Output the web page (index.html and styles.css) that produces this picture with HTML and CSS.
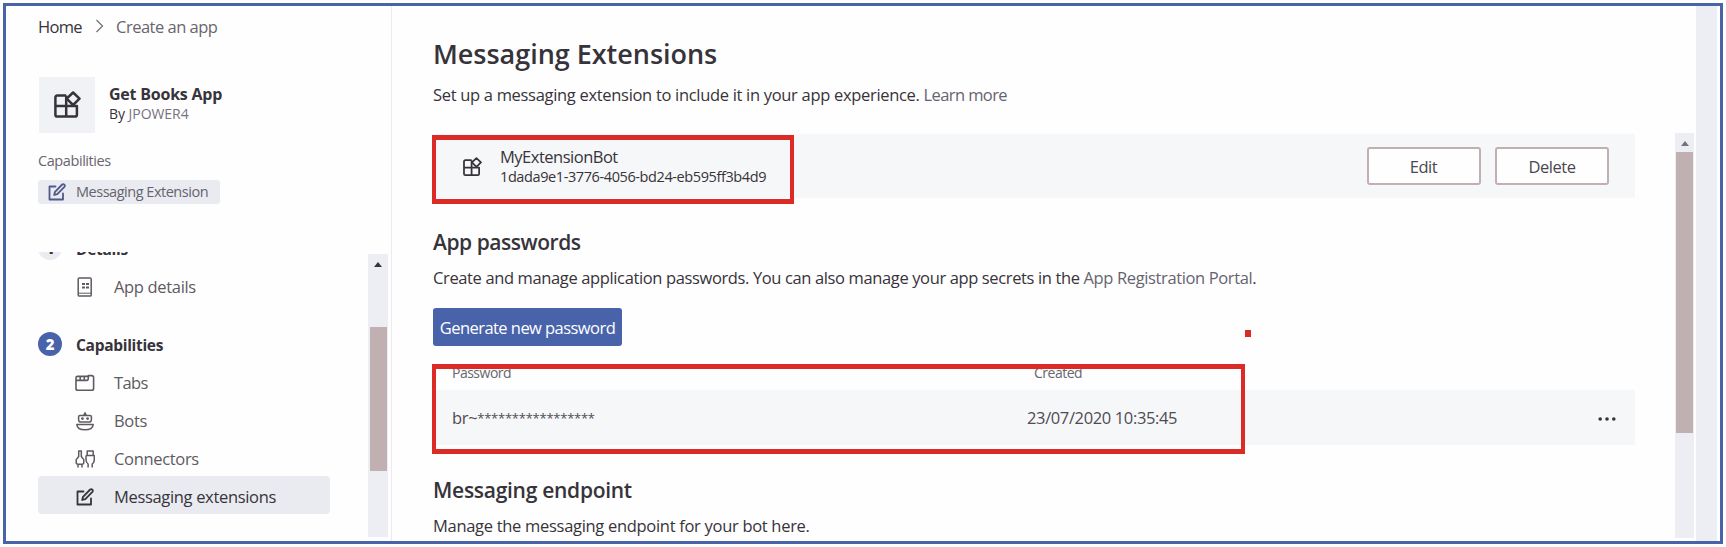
FILE: index.html
```
<!DOCTYPE html>
<html lang="en">
<head>
<meta charset="utf-8">
<title>Messaging Extensions</title>
<link rel="stylesheet" href="styles.css">
</head>
<body>
<svg class="defs" aria-hidden="true">
  <symbol id="i-apps" viewBox="0 0 27 27"><g fill="none" stroke="currentColor" stroke-width="2.5" stroke-linejoin="round"><path d="M12.2 4.6H3.3Q1.4 4.6 1.4 6.5V23.7Q1.4 25.6 3.3 25.6H21Q22.9 25.6 22.9 23.7V15H1.4M12.2 4.6V25.6"/><path d="M19.1 1.5L25.5 7.7L19.1 14L12.7 7.7Z"/></g></symbol>
  <symbol id="i-edit" viewBox="0 0 18 18"><g fill="none" stroke="currentColor" stroke-width="1.8" stroke-linejoin="round" stroke-linecap="round"><path d="M7.5 3.5H1.5V16.5H15V10.5"/><path d="M6.2 12L7 8.8L14.2 1.5Q15.3 .7 16.3 1.7Q17.3 2.8 16.4 3.8L9.3 11.1Z"/></g></symbol>
  <symbol id="i-doc" viewBox="0 0 18 20"><g fill="none" stroke="currentColor" stroke-width="1.5"><rect x="2.2" y=".9" width="13" height="18.2" rx="1.2"/><path d="M2.5 16.2H15" stroke-width="1"/></g><path d="M6 6H9V8H6zM10 6H13V8H10zM6 9.6H9V11.6H6zM10 9.6H13V11.6H10z" fill="currentColor"/></symbol>
  <symbol id="i-tabs" viewBox="0 0 20 18"><g fill="none" stroke="currentColor" stroke-width="1.6" stroke-linejoin="round"><path d="M13.3 4V1.6H16.6Q18.6 1.6 18.6 3.8V14.4Q18.6 16.2 16.8 16.2H2.8Q1 16.2 1 14.4V4Q1 2.4 2.6 2.4H13.3M1 6.4H11.8Q13.3 6.4 13.3 4M5.2 2.6V6M9.3 2.6V6"/></g></symbol>
  <symbol id="i-bot" viewBox="0 0 20 20"><g fill="none" stroke="currentColor" stroke-width="1.5" stroke-linejoin="round"><path d="M5 4.4H15Q16.4 4.4 16.4 5.8V8.4Q16.4 11 14 11H6Q3.6 11 3.6 8.4V5.8Q3.6 4.4 5 4.4Z"/><path d="M1.8 13.6H18.2Q17.6 18.8 10 18.8Q2.4 18.8 1.8 13.6Z"/></g><path d="M10 .4L12.2 4.6H7.8z" fill="currentColor"/><circle cx="7.4" cy="7.6" r="1.4" fill="currentColor"/><circle cx="12.6" cy="7.6" r="1.4" fill="currentColor"/></symbol>
  <symbol id="i-plug" viewBox="0 0 20 18"><g fill="none" stroke="currentColor" stroke-width="1.5" stroke-linejoin="round"><path d="M3.7 1H6.3V6.5L8.8 9.6V12.2Q8.8 14.2 7 14.2H3Q1.2 14.2 1.2 12.2V9.6L3.7 6.5ZM3 14.5V17.6M7 14.5V17.6"/><path d="M12.2 1H18.2V5.6H12.2ZM11 5.6H19.3V9.5Q19.3 12.4 17.2 14V17.5M11 5.6V9.5Q11 12.4 13.1 14V17.5"/></g></symbol>
</svg>
<div class="shell">
  <aside class="side">
    <nav class="crumbs"><span class="home">Home</span><svg class="chev" viewBox="0 0 9 14"><path d="M1.5 1L7.5 7L1.5 13"/></svg><span class="here">Create an app</span></nav>
    <div class="app">
      <div class="tile"><svg><use href="#i-apps"/></svg></div>
      <div><div class="app-name">Get Books App</div><div class="app-by">By <span>JPOWER4</span></div></div>
    </div>
    <div class="cap-label">Capabilities</div>
    <div class="chip"><svg><use href="#i-edit"/></svg><span>Messaging Extension</span></div>
    <div class="list">
      <div class="steps">
        <div class="step clipped"><b class="num off">1</b><span>Details</span></div>
        <div class="item"><svg><use href="#i-doc"/></svg><span>App details</span></div>
        <div class="step second"><b class="num">2</b><span>Capabilities</span></div>
        <div class="item"><svg><use href="#i-tabs"/></svg><span class="tabs">Tabs</span></div>
        <div class="item"><svg><use href="#i-bot"/></svg><span>Bots</span></div>
        <div class="item"><svg><use href="#i-plug"/></svg><span>Connectors</span></div>
        <div class="item sel"><svg><use href="#i-edit"/></svg><span>Messaging extensions</span></div>
      </div>
      <div class="bar side-bar"><i class="up"></i><i class="thumb"></i></div>
    </div>
  </aside>
  <main class="main">
    <header class="head">
      <h1>Messaging Extensions</h1>
      <p>Set up a messaging extension to include it in your app experience. <a class="learn">Learn more</a></p>
    </header>
    <div class="body">
      <div class="content">
        <section class="card">
          <div class="mark"></div>
          <svg><use href="#i-apps"/></svg>
          <div class="bot"><div class="bot-name">MyExtensionBot</div><div class="bot-id">1dada9e1-3776-4056-bd24-eb595ff3b4d9</div></div>
          <button class="btn">Edit</button><button class="btn">Delete</button>
        </section>
        <h2>App passwords</h2>
        <p class="intro">Create and manage application passwords. You can also manage your app secrets in the <a>App Registration Portal</a>.</p>
        <button class="primary">Generate new password</button>
        <section class="table">
          <div class="mark wide"></div><div class="dot"></div>
          <div class="th"><span>Password</span><span class="created">Created</span></div>
          <div class="tr"><span class="pw">br~<span class="stars">*****************</span></span><span class="date">23/07/2020 10:35:45</span><svg class="more" viewBox="0 0 18 4"><circle cx="2.2" cy="2" r="1.8"/><circle cx="9" cy="2" r="1.8"/><circle cx="15.8" cy="2" r="1.8"/></svg></div>
        </section>
        <h2 class="endpoint">Messaging endpoint</h2>
        <p>Manage the messaging endpoint for your bot here.</p>
      </div>
      <div class="bar main-bar"><i class="up"></i><i class="thumb"></i></div>
    </div>
  </main>
  <div class="gutter"></div>
</div>
</body>
</html>
```
FILE: styles.css
```
* { box-sizing: border-box; }
body { margin: 0; background: #fefefe; color: #37333a; font: 16.5px/24px "Open Sans", "Noto Sans", sans-serif; overflow: hidden; letter-spacing: -.33px; }
.defs { position: absolute; width: 0; height: 0; }
h1, h2, p { margin: 0; white-space: nowrap; }
svg { display: block; flex: none; }
.shell { display: flex; width: 1720px; height: 541px; margin: 3px; border: 3px solid #4963ab; overflow: hidden; }

.side { width: 386px; flex: none; padding: 9px 0 0 33px; border-right: 1px solid #ececf0; white-space: nowrap; }
.crumbs { display: flex; align-items: center; margin-left: -1px; }
.home { width: 45px; font-weight: 500; letter-spacing: -.7px; }
.chev { width: 9px; height: 14px; margin: 0 12px 2px 12px; fill: none; stroke: #77727a; stroke-width: 1.3; }
.here { color: #6a656d; letter-spacing: -.5px; }
.app { display: flex; align-items: center; gap: 14px; margin-top: 38px; height: 56px; }
.tile { width: 56px; height: 56px; background: #f0f2f6; display: grid; place-items: center; }
.tile svg { width: 27px; height: 27px; margin-top: -2px; }
.app-name { font-weight: 700; font-size: 16px; line-height: 20px; letter-spacing: -.22px; margin-top: -2px; }
.app-by { font-size: 14px; line-height: 20px; letter-spacing: -.05px; }
.app-by span { color: #77727e; }
.cap-label { margin: 18px 0 0 -1px; font-size: 14.5px; line-height: 20px; letter-spacing: -.42px; color: #6a656d; }
.chip { display: flex; align-items: center; width: 182px; height: 24px; margin: 9px 0 0 -1px; padding-left: 10px; gap: 10px; border-radius: 3px; background: #e9ebf0; color: #66636f; font-size: 14.5px; letter-spacing: -.48px; }
.chip svg { width: 18px; height: 18px; color: #51598a; }
.list { display: flex; margin: 48px 0 0 -1px; height: 285px; overflow: hidden; }
.steps { width: 292px; }
.step { display: flex; align-items: center; gap: 14px; height: 24px; font-weight: 700; font-size: 15.5px; letter-spacing: -.3px; }
.clipped { margin-top: -16px; }
.clipped span { padding-top: 2px; }
.second { margin-top: 28px; }
.second span { padding-top: 1px; }
.num { width: 24px; height: 24px; border-radius: 50%; background: #4963ab; color: #fff; text-align: center; font-size: 15px; }
.num.off { background: #eaecf1; color: #37333a; }
.item { display: flex; align-items: center; height: 38px; padding: 3px 0 0 37px; gap: 19px; color: #5f5a62; }
.step + .item { margin-top: 6px; }
.item svg { width: 20px; height: 20px; }
.sel { background: #e9ebf0; border-radius: 4px; color: #37333a; }
.sel svg { width: 18px; height: 18px; margin: 0 1px 0 1px; }
.item .tabs { letter-spacing: -.6px; }

.bar { background: #eceef3; display: flex; flex-direction: column; align-items: center; }
.up { width: 0; border: 4.5px solid transparent; border-top: 0; border-bottom: 5px solid #37333a; }
.thumb { background: #c1b0b1; }
.side-bar { width: 20px; height: 284px; margin: 2px 0 0 38px; }
.side-bar .up { margin-top: 8px; }
.side-bar .thumb { width: 17px; height: 144px; margin-top: 60px; }

.main { width: 1304px; flex: none; display: flex; flex-direction: column; }
.head { height: 127px; padding: 30px 0 0 41px; }
h1 { font-size: 27px; line-height: 36px; font-weight: 600; letter-spacing: -.03px; }
.head p { margin-top: 11px; letter-spacing: -.31px; }
a { color: #66636f; }
.learn { letter-spacing: -.6px; }
.body { display: flex; flex: 1; }
.content { width: 1202px; margin-left: 41px; padding-top: 1px; }
.card { position: relative; display: flex; align-items: center; height: 64px; padding: 0 26px 0 30px; background: #f6f7f9; }
.card svg { width: 19px; height: 19px; }
.bot { margin: 1px auto 0 18px; }
.bot-name { line-height: 20px; font-size: 16.5px; letter-spacing: -.5px; }
.bot-id { line-height: 20px; font-size: 14.5px; letter-spacing: -.4px; }
.btn { width: 114px; height: 38px; margin-left: 14.5px; border: 2px solid #c1b0b1; border-radius: 3px; background: #fefefe; color: #4a464e; font: inherit; letter-spacing: -.5px; padding: 1px 0 0; }
.mark { position: absolute; left: -1px; top: 1px; width: 362px; height: 69px; border: 4px solid #dc2b27; border-width: 5px 4px; pointer-events: none; }
h2 { margin-top: 30px; font-size: 21px; line-height: 28px; font-weight: 600; letter-spacing: -.46px; }
.content p { margin-top: 11px; }
.content .intro { letter-spacing: -.37px; margin-top: 10px; }
.primary { display: block; width: 189px; height: 38px; margin-top: 18px; border: 0; border-radius: 3px; background: #4963ab; color: #fff; font: inherit; letter-spacing: -.55px; padding: 2px 0 0; }
.table { position: relative; margin-top: 17px; }
.mark.wide { top: 1px; width: 813px; height: 90px; }
.dot { position: absolute; left: 812px; top: -33px; width: 6px; height: 7px; background: #dc2b27; }
.th { display: flex; height: 20px; padding-left: 19px; font-size: 14px; line-height: 20px; letter-spacing: -.5px; color: #6a656d; }
.th span { width: 582px; }
.tr { display: flex; align-items: center; height: 55px; margin-top: 7px; padding: 0 19px 0 19px; background: #f6f7f9; color: #4f4b53; }
.pw { width: 575px; }
.stars { font-size: 13px; line-height: 1; letter-spacing: -.25px; vertical-align: 1px; }
.date { letter-spacing: -.37px; }
.more { width: 18px; height: 4px; margin: 3px 0 0 auto; fill: #37333a; }
.endpoint { margin-top: 31px; letter-spacing: -.28px; }
.content .endpoint + p { margin-top: 10px; letter-spacing: -.3px; }
.main-bar { width: 19px; height: 405px; margin-left: 40px; }
.main-bar .up { margin-top: 8px; border-bottom-color: #77727a; }
.main-bar .thumb { width: 17px; height: 281px; margin-top: 6px; }
.gutter { width: 21px; flex: none; background: #eceef3; }
```
